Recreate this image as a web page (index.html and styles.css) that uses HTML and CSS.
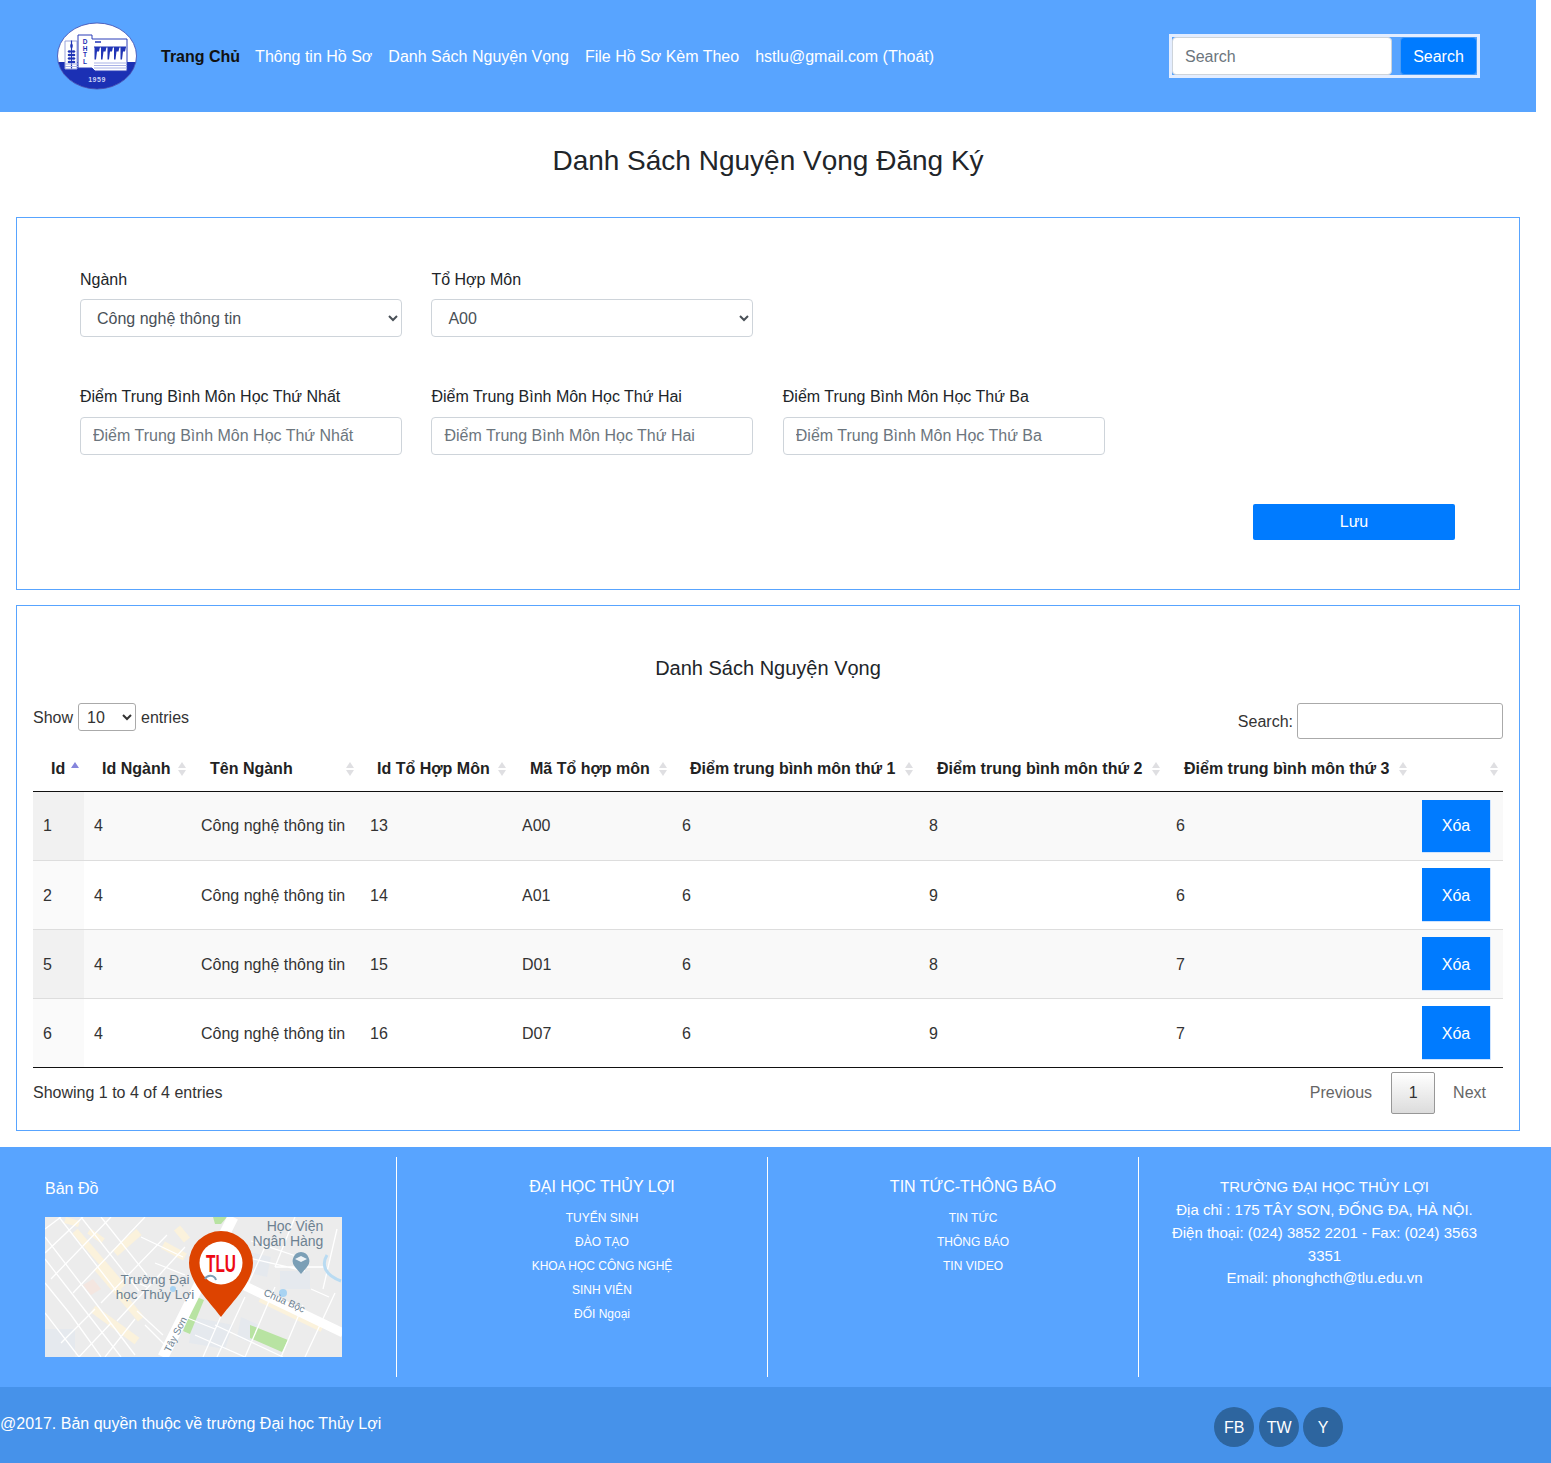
FILE: index.html
```html
<!DOCTYPE html>
<html lang="vi">
<head>
<meta charset="utf-8">
<title>Danh Sách Nguyện Vọng Đăng Ký</title>
<link rel="stylesheet" href="styles.css">
</head>
<body>
<header class="topbar">
  <svg class="logo" viewBox="0 0 80 68" width="80" height="68" aria-label="Logo">
    <defs><clipPath id="lc"><ellipse cx="40" cy="34" rx="39.500" ry="33"/></clipPath></defs>
    <ellipse cx="40" cy="34" rx="39.500" ry="33" fill="#fff"/>
    <g clip-path="url(#lc)">
      <rect x="0" y="40" width="80" height="28" fill="#1b30b4"/>
      <path d="M8 19h12v28H8z" fill="#fff" stroke="#9aa4dc" stroke-width="1"/>
      <path d="M14.500 18.500v28" stroke="#2135b6" stroke-width="1.200"/>
      <path d="M14.500 21c1.500 1.500 2 3.500 0 6-2-2.500-1.500-4.500 0-6z" fill="#2135b6"/>
      <g fill="#2135b6">
        <ellipse cx="12.500" cy="29.500" rx="1.800" ry="1.300"/><ellipse cx="16.500" cy="29.500" rx="1.800" ry="1.300"/>
        <ellipse cx="12.500" cy="33" rx="1.800" ry="1.300"/><ellipse cx="16.500" cy="33" rx="1.800" ry="1.300"/>
        <ellipse cx="12.500" cy="36.500" rx="1.800" ry="1.300"/><ellipse cx="16.500" cy="36.500" rx="1.800" ry="1.300"/>
        <ellipse cx="12.500" cy="40" rx="1.800" ry="1.300"/><ellipse cx="16.500" cy="40" rx="1.800" ry="1.300"/>
      </g>
      <path d="M21 13h14v4h35v32H38l-3-3H21z" fill="#fff" stroke="#2a3db8" stroke-width="1"/>
      <path d="M38 20h6" stroke="#2135b6" stroke-width="1.300"/>
      <path d="M37 24.500h32v1H37z" fill="#2135b6"/>
      <path d="M37.500 25h5.500l-1 4.500h-2l-1 8h-1.500zM44 25h5.500l-1 4.500h-2l-1 8H44zM50.500 25H56l-1 4.500h-2l-1 8h-1.500zM57 25h5.500l-1 4.500h-2l-1 8H57zM63.500 25H69l-1 4.500h-2l-1 8h-1.500z" fill="#2135b6"/>
      <path d="M8 42h13M8 44.500h13M37 41h33M37 43.500h33M37 46h33" stroke="#aab3e6" stroke-width="1.100"/>
      <text class="logo-letter" x="28" y="22">D</text>
      <text class="logo-letter" x="28" y="28.700">H</text>
      <text class="logo-letter" x="28" y="35.400">T</text>
      <text class="logo-letter" x="28" y="42">L</text>
      <text class="logo-year" x="40" y="60">1959</text>
    </g>
    <ellipse cx="40" cy="34" rx="39.500" ry="33" fill="none" stroke="#3d49ad" stroke-width=".8"/>
  </svg>
  <nav class="nav">
    <a class="nav-link active" href="#">Trang Chủ</a>
    <a class="nav-link" href="#">Thông tin Hồ Sơ</a>
    <a class="nav-link" href="#">Danh Sách Nguyện Vọng</a>
    <a class="nav-link" href="#">File Hồ Sơ Kèm Theo</a>
    <a class="nav-link" href="#">hstlu@gmail.com (Thoát)</a>
  </nav>
  <form class="top-search">
    <input class="top-input" type="text" placeholder="Search">
    <button class="top-btn" type="button">Search</button>
  </form>
</header>

<h3 class="page-title">Danh Sách Nguyện Vọng Đăng Ký</h3>

<section class="box form-box">
  <div class="form-grid">
    <div class="field first"><label>Ngành</label>
      <select class="control"><option>Công nghệ thông tin</option></select></div>
    <div class="field first"><label>Tổ Hợp Môn</label>
      <select class="control"><option>A00</option></select></div>
    <div class="field-empty"></div>
    <div class="field"><label>Điểm Trung Bình Môn Học Thứ Nhất</label>
      <input class="control" type="text" placeholder="Điểm Trung Bình Môn Học Thứ Nhất"></div>
    <div class="field"><label>Điểm Trung Bình Môn Học Thứ Hai</label>
      <input class="control" type="text" placeholder="Điểm Trung Bình Môn Học Thứ Hai"></div>
    <div class="field"><label>Điểm Trung Bình Môn Học Thứ Ba</label>
      <input class="control" type="text" placeholder="Điểm Trung Bình Môn Học Thứ Ba"></div>
  </div>
  <div class="save-row"><button class="save-btn" type="button">Lưu</button></div>
</section>

<section class="box list-box">
  <h4 class="list-title">Danh Sách Nguyện Vọng</h4>
  <div class="dt-top">
    <div class="dt-length"><span class="dt-text">Show</span> <select class="dt-select"><option>10</option></select> <span class="dt-text">entries</span></div>
    <div class="dt-filter"><span class="dt-text">Search:</span> <input class="dt-search" type="search"></div>
  </div>
  <table class="dt">
    <colgroup>
      <col class="c1"><col class="c2"><col class="c3"><col class="c4"><col class="c5"><col class="c6"><col class="c7"><col class="c8"><col class="c9">
    </colgroup>
    <thead>
      <tr>
        <th class="sort-asc">Id</th><th class="sort">Id Ngành</th><th class="sort">Tên Ngành</th><th class="sort">Id Tổ Hợp Môn</th><th class="sort">Mã Tổ hợp môn</th><th class="sort">Điểm trung bình môn thứ 1</th><th class="sort">Điểm trung bình môn thứ 2</th><th class="sort">Điểm trung bình môn thứ 3</th><th class="sort"></th>
      </tr>
    </thead>
    <tbody>
      <tr class="odd"><td class="key">1</td><td>4</td><td>Công nghệ thông tin</td><td>13</td><td>A00</td><td>6</td><td>8</td><td>6</td><td class="act"><button class="del" type="button">Xóa</button></td></tr>
      <tr><td class="key">2</td><td>4</td><td>Công nghệ thông tin</td><td>14</td><td>A01</td><td>6</td><td>9</td><td>6</td><td class="act"><button class="del" type="button">Xóa</button></td></tr>
      <tr class="odd"><td class="key">5</td><td>4</td><td>Công nghệ thông tin</td><td>15</td><td>D01</td><td>6</td><td>8</td><td>7</td><td class="act"><button class="del" type="button">Xóa</button></td></tr>
      <tr><td class="key">6</td><td>4</td><td>Công nghệ thông tin</td><td>16</td><td>D07</td><td>6</td><td>9</td><td>7</td><td class="act"><button class="del" type="button">Xóa</button></td></tr>
    </tbody>
  </table>
  <div class="dt-bottom">
    <div class="dt-info">Showing 1 to 4 of 4 entries</div>
    <div class="pager"><a class="pg" href="#">Previous</a><a class="pg current" href="#">1</a><a class="pg next" href="#">Next</a></div>
  </div>
</section>

<footer class="footer">
  <div class="foot-cols">
    <div class="fcol fcol-map">
      <div class="map-title">Bản Đồ</div>
      <svg class="map" viewBox="0 0 297 140" width="297" height="140" aria-label="Bản đồ">
        <rect width="297" height="140" fill="#ececec"/>
        <g fill="none" stroke="#fbf2dc" stroke-linecap="butt">
          <path d="M20 3l14 4M44 14l14 10" stroke-width="6"/>
          <path d="M30 14l48 56" stroke-width="7"/>
          <path d="M94 15L70 36M118 28l22 12M132 11l10 12" stroke-width="8"/>
          <path d="M52 50l44 52M48 92l44 32" stroke-width="8"/>
          <path d="M215 82l62 30" stroke-width="6"/>
        </g>
        <path d="M38 68l10-6 8 10-10 6z" fill="#f4e6e0"/>
        <g fill="#e5e9ee">
          <path d="M148 100l40 8-8 24-36-6z"/>
          <path d="M235 54h30v18h-30z"/>
          <path d="M200 34l26 6-4 20-26-6z"/>
          <path d="M0 112h30v28H0z"/>
          <path d="M196 100l18 8-8 18-14-6z"/>
        </g>
        <g fill="#b8e3a2">
          <path d="M205 108l38 15-6 12-32-14z"/>
          <path d="M152 80l7 3-14 34-7-3z"/>
          <path d="M168 0h14l-6 7h-6z"/>
        </g>
        <g fill="none" stroke="#fff" stroke-width="1.300">
          <path d="M0 20l46 60 44 58M14 0l62 80M36 0l58 74M56 0l46 58M0 42l42 54 34 44M0 66l26 32 30 42M0 96l34 44"/>
          <path d="M0 12L16 0M0 36L38 0M6 62L66 0M28 76L100 0M56 86L122 18M72 104L140 30M16 126l34-34M34 140l32-34M60 140l30-38"/>
          <path d="M96 20l42 20M110 46l30 12M84 62l18 8M100 108l22 22M92 94l26 24"/>
          <path d="M170 108l68 32M150 118l50 22M140 100l30 12M200 80l-28 60M180 90l-22 50M230 70l-30 70M258 88l-22 52M290 76l-30 64M220 30l-20 44M250 0l-20 50M230 50h50M200 40l60 14M266 72l18 8M292 12l-14 60M206 24l48 16"/>
        </g>
        <path d="M282 38c-6 10-2 20 14 26" fill="none" stroke="#b9dbf2" stroke-width="3"/>
        <path d="M188 0L118 140" stroke="#fff" stroke-width="11" fill="none"/>
        <path d="M165 52L298 116" stroke="#fff" stroke-width="9" fill="none"/>
        <g fill="#a8d3f2"><circle cx="128" cy="72" r="3"/><circle cx="238" cy="76" r="4"/></g>
        <path d="M256 35a9 9 0 0 1 6 15l-6 7-6-7a9 9 0 0 1 6-15z" fill="#7b9fb6"/>
        <path d="M250 42l6-3 6 3-6 3z" fill="#eef3f6"/>
        <text class="map-label" x="250" y="14" text-anchor="middle">Học Viện</text>
        <text class="map-label" x="243" y="29" text-anchor="middle">Ngân Hàng</text>
        <text class="map-label-sm" x="110" y="67" text-anchor="middle">Trường Đại</text>
        <text class="map-label-sm" x="110" y="82" text-anchor="middle">học Thủy Lợi</text>
        <text class="map-road" transform="translate(218 78) rotate(24)">Chùa Bộc</text>
        <text class="map-road" transform="translate(125 136) rotate(-63)">Tây Sơn</text>
        <path d="M176 14a32 32 0 0 1 32 32c0 20-22 40-32 54-10-14-32-34-32-54a32 32 0 0 1 32-32z" fill="#dd4300"/>
        <circle cx="176" cy="46" r="21.500" fill="#fff"/>
        <path d="M160 62a6 6 0 0 1 11 1" fill="none" stroke="#7b9fb6" stroke-width="2"/>
        <text class="map-pin" x="176" y="55" text-anchor="middle" textLength="30" lengthAdjust="spacingAndGlyphs">TLU</text>
      </svg>
    </div>
    <div class="fcol fcol-links">
      <div class="fhead">ĐẠI HỌC THỦY LỢI</div>
      <a class="flink" href="#">TUYỂN SINH</a>
      <a class="flink" href="#">ĐÀO TẠO</a>
      <a class="flink" href="#">KHOA HỌC CÔNG NGHỆ</a>
      <a class="flink" href="#">SINH VIÊN</a>
      <a class="flink" href="#">ĐỐI Ngoại</a>
    </div>
    <div class="fcol fcol-links">
      <div class="fhead">TIN TỨC-THÔNG BÁO</div>
      <a class="flink" href="#">TIN TỨC</a>
      <a class="flink" href="#">THÔNG BÁO</a>
      <a class="flink" href="#">TIN VIDEO</a>
    </div>
    <div class="fcol fcol-info">
      TRƯỜNG ĐẠI HỌC THỦY LỢI<br>
      Địa chỉ : 175 TÂY SƠN, ĐỐNG ĐA, HÀ NỘI.<br>
      Điện thoại: (024) 3852 2201 - Fax: (024) 3563 3351<br>
      Email: phonghcth@tlu.edu.vn
    </div>
  </div>
  <div class="copy">
    <div class="copy-text">@2017. Bản quyền thuộc về trường Đại học Thủy Lợi</div>
    <div class="social">
      <a class="soc" href="#">FB</a><a class="soc" href="#">TW</a><a class="soc" href="#">Y</a>
    </div>
  </div>
</footer>
</body>
</html>
```
FILE: styles.css
```css
* { box-sizing: border-box; }
html, body { margin: 0; padding: 0; }
body {
  font-family: "Liberation Sans", Arial, sans-serif;
  font-size: 16px;
  line-height: 24px;
  color: #212529;
  background: #fff;
  width: 1551px;
  overflow-x: hidden;
}
a { text-decoration: none; }

/* Header */
.topbar {
  width: 1536px;
  height: 112px;
  background: #58a4ff;
  display: flex;
  align-items: center;
  padding-left: 57px;
}
.logo { flex: none; }
.logo-letter { font: bold 6.500px "Liberation Sans", sans-serif; fill: #1b30b4; text-anchor: middle; }
.logo-year { font: bold 7px "Liberation Sans", sans-serif; fill: #c9d2f5; text-anchor: middle; letter-spacing: .5px; }
.nav { display: flex; margin-left: 16px; padding-top: 2px; }
.nav-link { padding: 8px; color: #fff; white-space: nowrap; }
.nav-link.active { color: #111; font-weight: 700; margin-right: -1px; }
.top-search {
  margin-left: auto;
  margin-right: 56px;
  width: 311px;
  height: 44px;
  border: 3px solid #e3edff;
  display: flex;
  justify-content: space-between;
}
.top-input {
  width: 220px;
  height: 38px;
  border: 1px solid #ced4da;
  border-radius: 4px;
  padding: 8px 12px 6px;
  font: 16px "Liberation Sans", sans-serif;
  background: #fff;
}
.top-input::placeholder, .control::placeholder { color: #6c757d; opacity: 1; }
.top-btn {
  width: 77px;
  height: 38px;
  padding-top: 3px;
  background: #007bff;
  color: #fff;
  border: 1px solid #4c9cf5;
  border-radius: 4px;
  font: 16px "Liberation Sans", sans-serif;
}

/* Title */
.page-title {
  margin: 0;
  width: 1536px;
  padding: 32px 0 39px;
  font-size: 28px;
  line-height: 34px;
  font-weight: 400;
  text-align: center;
}

/* Boxes */
.box {
  width: 1504px;
  margin-left: 16px;
  border: 1px solid #58a4ff;
  background: #fff;
}
.form-box { padding: 49px 64px 49px 63px; margin-bottom: 15px; }
.form-grid {
  display: grid;
  grid-template-columns: repeat(3, 322px);
  column-gap: 29.400px;
  row-gap: 48px;
}
.field label { display: block; margin-bottom: 8px; white-space: nowrap; }
.field.first label { padding-top: 1px; margin-bottom: 7px; }
.control {
  display: block;
  width: 100%;
  height: 38px;
  border: 1px solid #ced4da;
  border-radius: 4px;
  padding: 6px 12px;
  font: 16px "Liberation Sans", sans-serif;
  color: #495057;
  background: #fff;
}
.save-row { display: flex; justify-content: flex-end; margin-top: 49px; }
.save-btn {
  width: 202px;
  height: 36px;
  background: #007bff;
  color: #fff;
  border: 0;
  border-radius: 2px;
  font: 16px "Liberation Sans", sans-serif;
}

.list-box { padding: 50px 16px 16px; }
.list-title {
  margin: 0 0 23px;
  font-size: 20px;
  line-height: 24px;
  font-weight: 400;
  text-align: center;
}
.dt-top { display: flex; justify-content: space-between; height: 36px; margin-bottom: 8px; color: #333; }
.dt-text { padding-top: 2px; }
.dt-length { display: flex; align-items: center; gap: 5px; height: 28px; }
.dt-select {
  width: 58px;
  height: 28px;
  padding: 0 4px;
  border: 1px solid #aaa;
  border-radius: 3px;
  background: #fff;
  color: #333;
  font: 16px "Liberation Sans", sans-serif;
}
.dt-filter { display: flex; align-items: center; gap: 4px; }
.dt-search {
  width: 206px;
  height: 36px;
  border: 1px solid #aaa;
  border-radius: 3px;
  background: #fff;
  padding: 0 5px;
}

/* Table */
.dt {
  width: 1470px;
  table-layout: fixed;
  border-collapse: separate;
  border-spacing: 0;
  color: #333;
  border-bottom: 1px solid #111;
}
.c1 { width: 51px; } .c2 { width: 107px; } .c3 { width: 169px; } .c4 { width: 152px; }
.c5 { width: 160px; } .c6, .c7, .c8 { width: 247px; } .c9 { width: 90px; }
.dt th {
  position: relative;
  height: 45px;
  padding: 10px 18px;
  text-align: left;
  font-weight: 700;
  color: #222;
  white-space: nowrap;
  border-bottom: 1px solid #111;
}
.dt th:nth-child(3) { padding-left: 19px; }
.dt th:nth-child(4) { padding-left: 17px; }
.sort::before, .sort::after, .sort-asc::before {
  content: "";
  position: absolute;
  right: 6px;
  width: 0;
  height: 0;
  border-left: 4px solid transparent;
  border-right: 4px solid transparent;
}
.dt th:nth-child(-n+2)::before, .dt th:nth-child(-n+2)::after,
.dt th:nth-child(5)::before, .dt th:nth-child(5)::after,
.dt th:nth-child(9)::before, .dt th:nth-child(9)::after { right: 5px; }
.sort::before { top: 15px; border-bottom: 6px solid #dfdfe2; }
.sort::after { top: 23px; border-top: 6px solid #dfdfe2; }
.sort-asc::before { top: 15px; border-bottom: 6px solid #8585dc; }
.dt td {
  height: 68px;
  padding: 8px 10px;
  white-space: nowrap;
  vertical-align: middle;
}
.dt tbody tr + tr td { border-top: 1px solid #ddd; height: 69px; padding: 9px 10px 7px; }
.dt tbody tr + tr td.act { padding: 7px 10px 8px 9px; }
.dt td.act { padding-left: 9px; }
.dt tr.odd td { background: #f9f9f9; }
.dt tr.odd td.key { background: #f1f1f1; }
.dt td.key { background: #fafafa; }
.del {
  display: block;
  width: 69px;
  height: 53px;
  margin-bottom: -1px;
  background: #007bff;
  color: #fff;
  border: 0;
  border-right: 1px solid #cfe4ff;
  border-bottom: 1px solid #cfe4ff;
  font: 16px "Liberation Sans", sans-serif;
}
.dt tbody tr + tr .del { height: 54px; padding-top: 4px; }
.dt-bottom { display: flex; justify-content: space-between; margin-top: 4px; height: 42px; color: #333; }
.dt-info { padding-top: 9px; }
.pager { display: flex; align-items: center; }
.pg { color: #666; padding: 0 17px; line-height: 40px; height: 42px; border: 1px solid transparent; }
.pg.next { padding-right: 16px; }
.pg.current {
  width: 44px;
  padding: 0;
  margin-left: 1px;
  text-align: center;
  color: #333;
  border-color: #979797;
  border-radius: 2px;
  background: linear-gradient(#ffffff, #dcdcdc);
}

/* Footer */
.footer { width: 1551px; margin-top: 16px; color: #fff; }
.foot-cols {
  height: 240px;
  background: #58a4ff;
  padding: 10px 0 10px 26px;
  display: grid;
  grid-template-columns: 371px 371px 371px 371px;
}
.fcol { height: 220px; border-right: 1px solid #fff; }
.fcol-map { padding: 20px 0 0 19px; }
.map-title { margin-bottom: 16px; line-height: 24px; }
.map { display: block; }
.map-label { font: 14px "Liberation Sans", sans-serif; fill: #6d8191; }
.map-label-sm { font: 13.500px "Liberation Sans", sans-serif; fill: #6d8191; }
.map-road { font: 10px "Liberation Sans", sans-serif; fill: #6d8191; }
.map-pin { font: bold 24px "Liberation Sans", sans-serif; fill: #ee0a14; }
.fcol-links { padding: 18px 0 0 40px; text-align: center; }
.fhead { margin-bottom: 7px; }
.flink { display: block; color: #fff; font-size: 12px; line-height: 24px; }
.fcol-info {
  border-right: 0;
  padding: 19px 20px 0;
  text-align: center;
  font-size: 15px;
  line-height: 22.850px;
}
.copy {
  height: 76px;
  background: #4692ea;
  display: flex;
}
.copy-text { padding-top: 25px; }
.social { display: flex; margin-left: 833px; padding-top: 20px; gap: 5px; }
.soc {
  width: 40px;
  height: 40px;
  border-radius: 50%;
  background: #2d659f;
  color: #fff;
  text-align: center;
  line-height: 41px;
}
.soc:last-child { margin-left: -1px; }
```
